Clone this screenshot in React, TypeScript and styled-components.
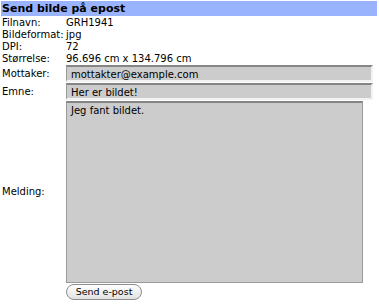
import { Fragment } from "react";
import styled, { createGlobalStyle } from "styled-components";

const GlobalStyle = createGlobalStyle`
  body {
    margin: 0;
    background: #ffffff;
    font-family: "DejaVu Sans", Verdana, sans-serif;
    font-size: 10px;
    color: #000000;
  }
`;

const Wrapper = styled.div`
  width: 376px;
  padding: 1px;
`;

const Header = styled.div`
  height: 15px;
  line-height: 15px;
  padding-left: 1px;
  background-color: #99b3ff;
  font-weight: bold;
  font-size: 11px;
`;

const Form = styled.div`
  display: grid;
  grid-template-columns: 64px 1fr;
  align-items: center;
  padding: 1px 0 0 1px;
`;

const Label = styled.div`
  line-height: 12px;
`;

const Value = styled.div`
  line-height: 12px;
`;

const TextInput = styled.div`
  box-sizing: border-box;
  width: 307px;
  height: 17px;
  margin: 0 0 1px 0;
  padding: 1px 0 0 4px;
  background-color: #cccccc;
  border-top: 2px solid #858585;
  border-left: 1px solid #9a9a9a;
  border-right: 2px solid #f2f2f2;
  border-bottom: 2px solid #f2f2f2;
  font-size: 10px;
  line-height: 13px;
  white-space: nowrap;
`;

const TextArea = styled.div`
  box-sizing: border-box;
  width: 297px;
  height: 182px;
  padding: 2px 4px;
  background-color: #cccccc;
  border: 1px solid #9a9a9a;
  border-top: 2px solid #858585;
  font-size: 10px;
  line-height: 12px;
`;

const ButtonCell = styled.div`
  grid-column: 2;
  padding-top: 1px;
`;

const Button = styled.div`
  box-sizing: border-box;
  width: 76px;
  height: 16px;
  border: 1px solid #8c8c8c;
  border-radius: 8px;
  background: linear-gradient(#ffffff, #f0f0f0 50%, #e2e2e2);
  font-size: 9.5px;
  line-height: 14px;
  text-align: center;
`;

const info = [
  ["Filnavn:", "GRH1941"],
  ["Bildeformat:", "jpg"],
  ["DPI:", "72"],
  ["Størrelse:", "96.696 cm x 134.796 cm"],
];

export default function App() {
  return (
    <>
      <GlobalStyle />
      <Wrapper>
        <Header>Send bilde på epost</Header>
        <Form>
          {info.map(([label, value]) => (
            <Fragment key={label}>
              <Label>{label}</Label>
              <Value>{value}</Value>
            </Fragment>
          ))}
          <Label>Mottaker:</Label>
          <TextInput>mottakter@example.com</TextInput>
          <Label>Emne:</Label>
          <TextInput>Her er bildet!</TextInput>
          <Label>Melding:</Label>
          <TextArea>Jeg fant bildet.</TextArea>
          <ButtonCell>
            <Button>Send e-post</Button>
          </ButtonCell>
        </Form>
      </Wrapper>
    </>
  );
}
